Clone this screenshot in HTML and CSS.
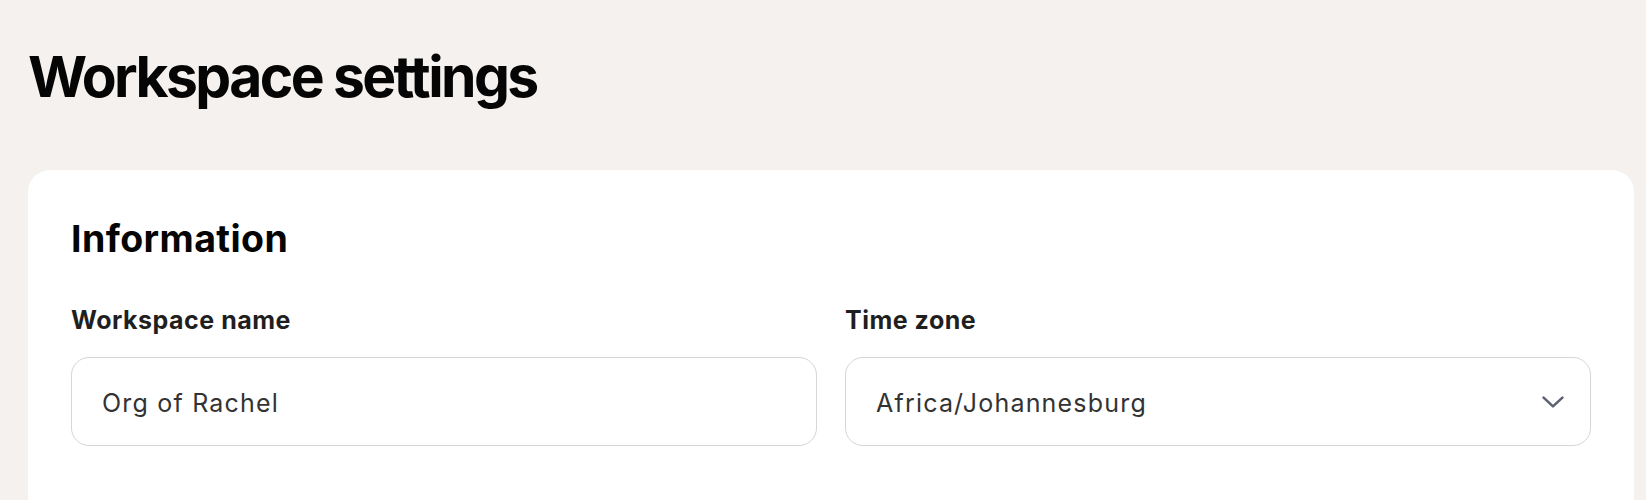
FILE: index.html
```html
<!DOCTYPE html>
<html lang="en">
<head>
<meta charset="utf-8">
<title>Workspace settings</title>
<link rel="stylesheet" href="styles.css">
</head>
<body>
<main class="page">
  <h1 class="page-title">Workspace settings</h1>
  <section class="card">
    <h2 class="card-title">Information</h2>
    <div class="fields">
      <div class="field">
        <label class="field-label" for="ws-name">Workspace name</label>
        <input class="control text-input" id="ws-name" type="text" value="Org of Rachel">
      </div>
      <div class="field">
        <span class="field-label">Time zone</span>
        <div class="control select" role="button">
          <span class="select-value">Africa/Johannesburg</span>
          <svg class="chevron" width="22" height="12" viewBox="0 0 22 12" aria-hidden="true">
            <polyline points="1.6,1.6 11,10.4 20.4,1.6" fill="none" stroke="currentColor" stroke-width="2.6" stroke-linecap="round" stroke-linejoin="round"/>
          </svg>
        </div>
      </div>
    </div>
  </section>
</main>
</body>
</html>
```
FILE: styles.css
```css
* { box-sizing: border-box; }

html, body {
  margin: 0;
  background: #f4f1ee;
}

body {
  font-family: Inter, "Liberation Sans", sans-serif;
  color: #1f1f1f;
}

.page {
  padding: 42px 12px 0 28px;
}

.page-title {
  margin: 0 0 58px;
  font-size: 57px;
  line-height: 70px;
  font-weight: 700;
  letter-spacing: -2.6px;
  color: #050505;
}

.card {
  background: #ffffff;
  border-radius: 22px;
  padding: 47px 43px 80px;
}

.card-title {
  margin: 0 0 44px;
  font-size: 37.5px;
  line-height: 44px;
  font-weight: 700;
  letter-spacing: 0.4px;
  color: #050505;
}

.fields {
  display: grid;
  grid-template-columns: 1fr 1fr;
  column-gap: 28px;
}

.field {
  display: flex;
  flex-direction: column;
  gap: 22px;
}

.field-label {
  font-size: 25px;
  line-height: 30px;
  font-weight: 700;
  letter-spacing: 0.5px;
  color: #1f1f1f;
}

.control {
  height: 89px;
  border: 1px solid #d8d5d2;
  border-radius: 18px;
  background: #ffffff;
  font-family: inherit;
  font-size: 25px;
  letter-spacing: 1.2px;
  color: #333333;
  padding: 2px 26px 0 30px;
}

.text-input {
  width: 100%;
  outline: none;
}

.select {
  display: flex;
  align-items: center;
  justify-content: space-between;
}

.chevron {
  color: #5e6372;
  margin-top: -2px;
}
```
